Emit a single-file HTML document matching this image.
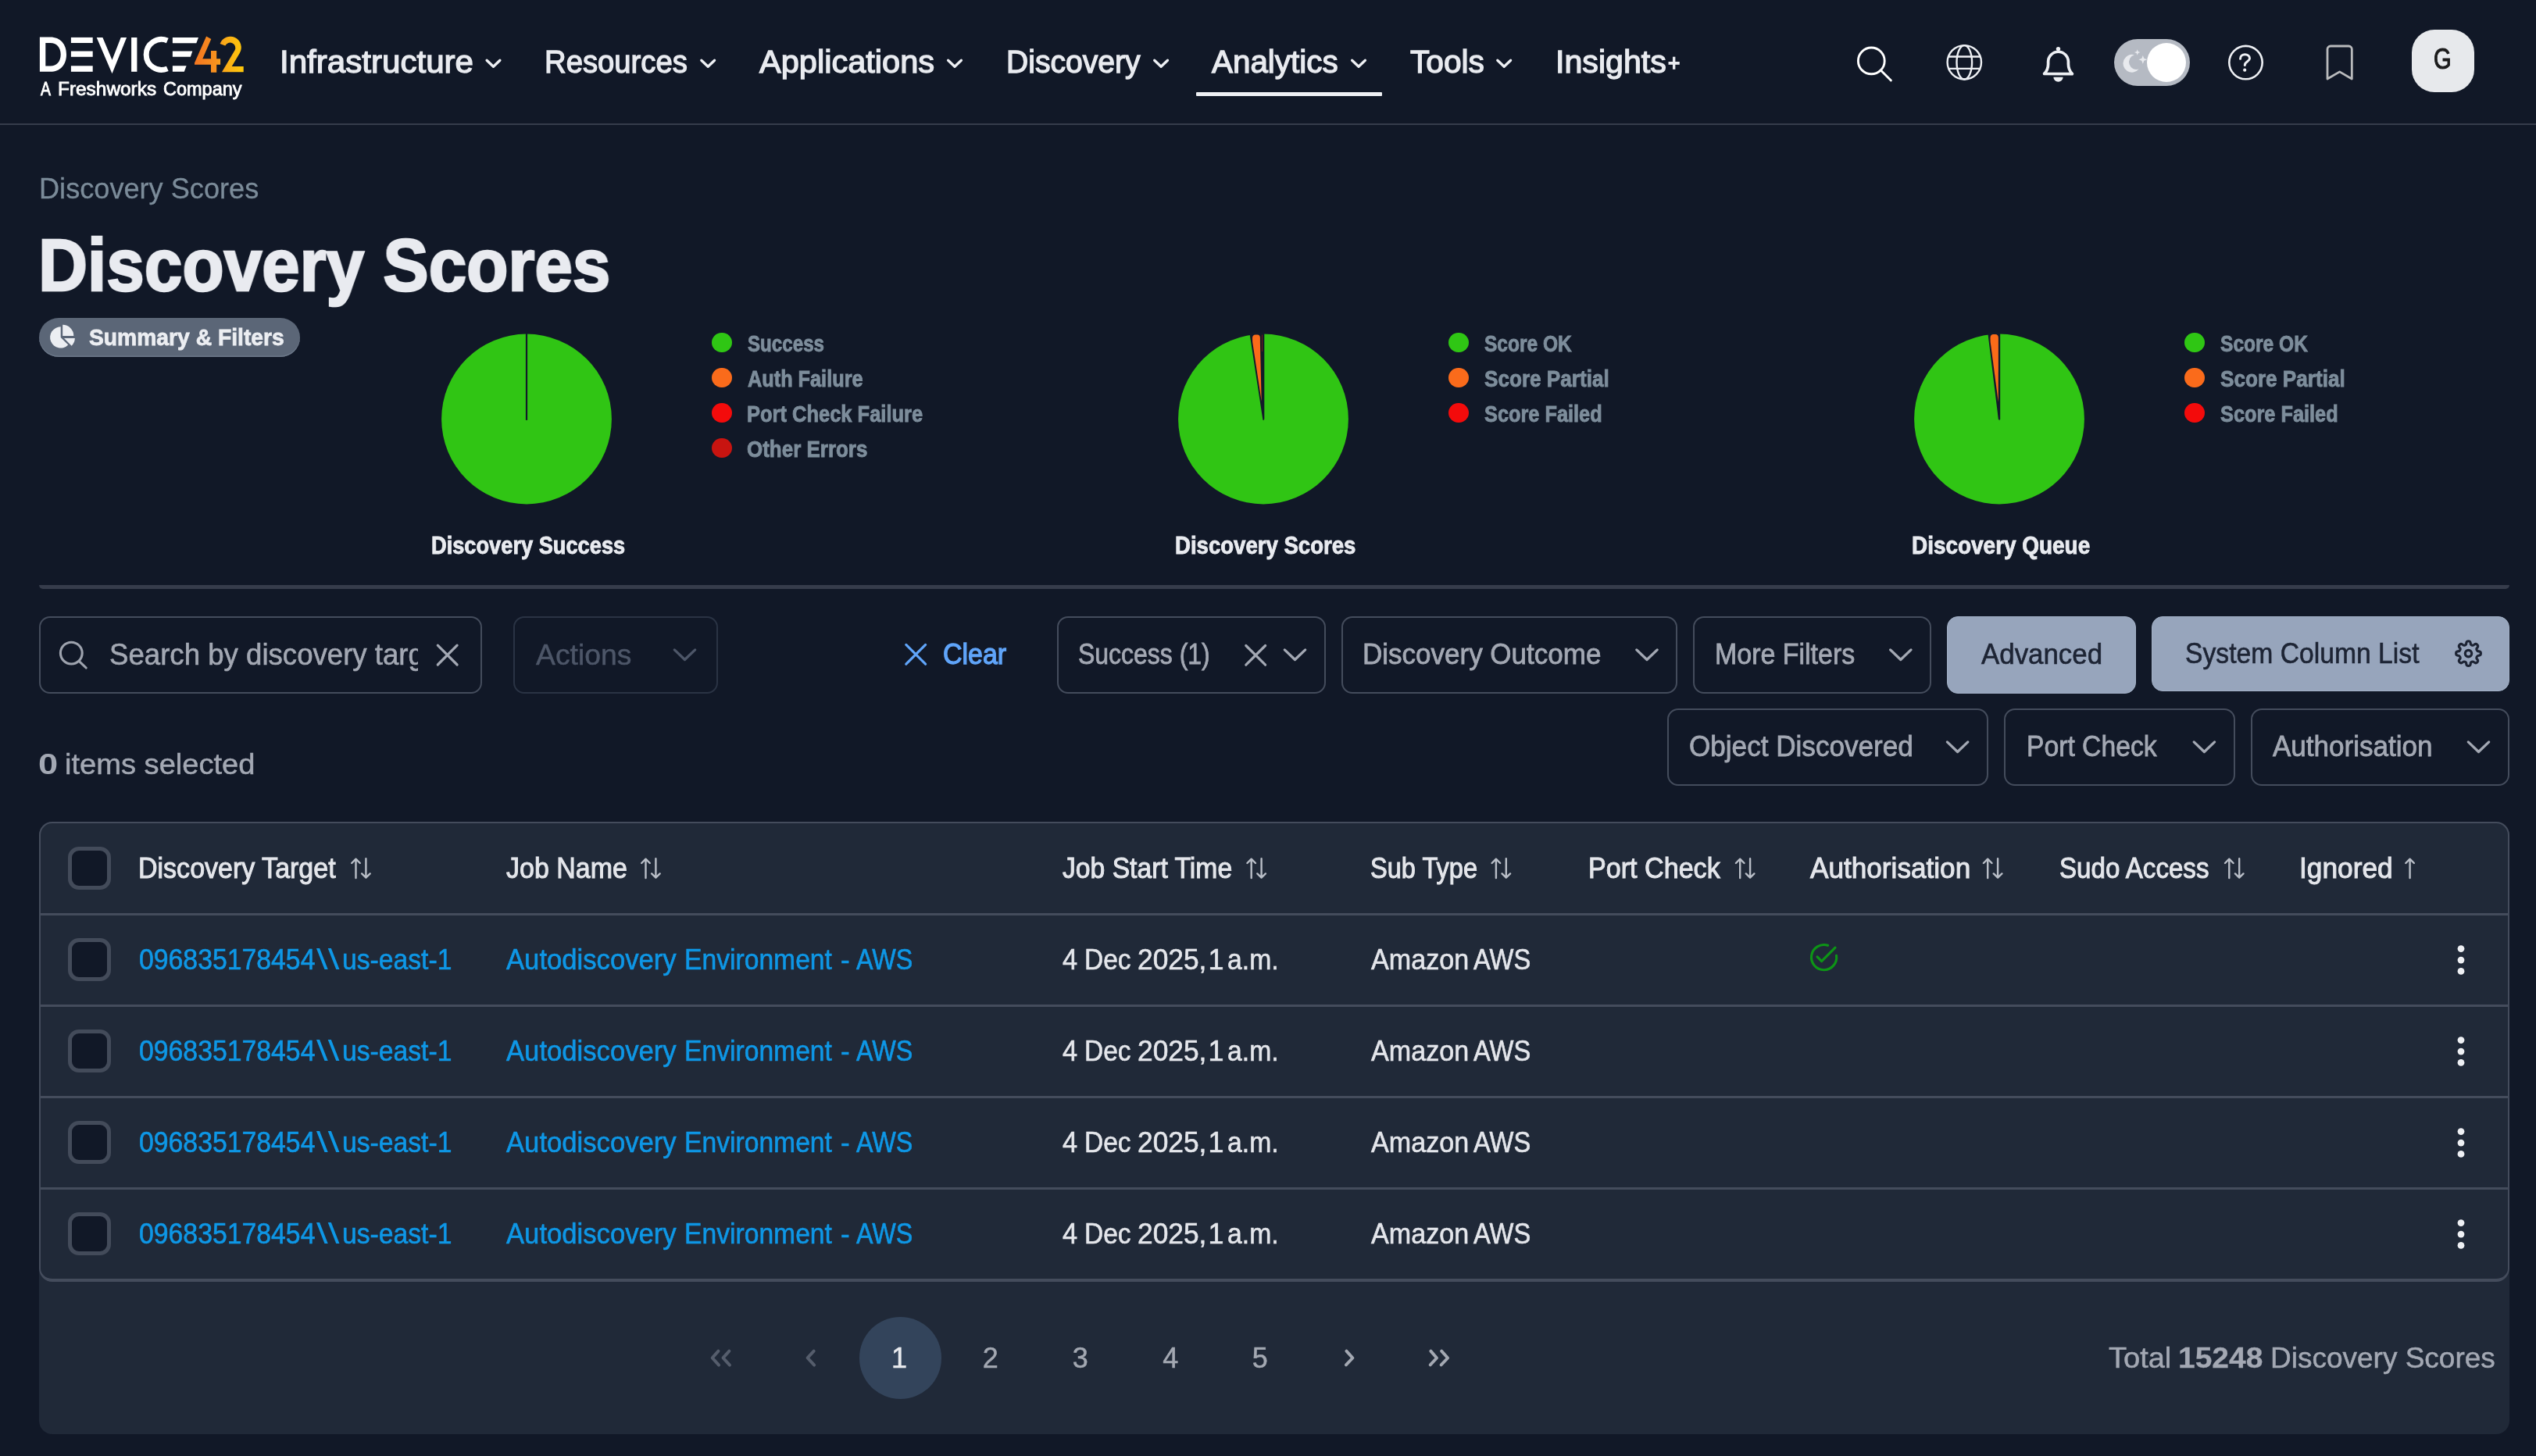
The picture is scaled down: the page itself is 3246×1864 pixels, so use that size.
<!DOCTYPE html>
<html lang="en"><head><meta charset="utf-8"><title>Discovery Scores - Device42</title>
<style>
*{margin:0;padding:0;box-sizing:border-box}
html,body{width:3246px;height:1864px;overflow:hidden;background:#111827}
body{position:relative;font-family:"Liberation Sans",sans-serif;color:#e9ebf0}
.t{position:absolute;line-height:0;white-space:pre;transform-origin:0 0;display:block}
.a{position:absolute;display:block}
#app{position:absolute;left:0;top:0;width:3246px;height:1864px;will-change:transform}
svg{position:absolute;overflow:visible}
.box{position:absolute;border:2px solid #444c5c;border-radius:14px;height:99px}
.btn{position:absolute;background:#97a5bc;border-radius:14px;border:1px solid #a2b0c6}
.cb{position:absolute;width:55px;height:55px;left:87px;border:5px solid #434b5a;border-radius:14px;background:#111827}
.hr{position:absolute;left:52px;width:3158px;height:3px;background:#444c5c}
.dot{position:absolute;width:25.6px;height:25.6px;border-radius:50%}
</style></head>
<body>
<div id="app">

<header class="topbar">
<div class="a" style="left:0;top:0;width:3246px;height:158px;background:#111827"></div>
<div class="a navline" style="left:0;top:158px;width:3246px;height:2px;background:#363c4b"></div>

<svg class="logo" width="3246" height="160" viewBox="0 0 3246 160" style="left:0;top:0">
<defs><linearGradient id="g42" gradientUnits="userSpaceOnUse" x1="249" y1="0" x2="312" y2="0">
<stop offset="0" stop-color="#f37521"/><stop offset="0.45" stop-color="#f7931e"/><stop offset="0.6" stop-color="#faa919"/><stop offset="1" stop-color="#ffc90a"/></linearGradient></defs>
<g fill="#ffffff">
<path fill-rule="evenodd" d="M50.9,47.6 H64.5 C77,47.6 85,56.5 85,69.7 C85,83 77,91.8 64.5,91.8 H50.9 Z M58.3,54.9 V84.5 H64.5 C72.5,84.5 77.7,78.7 77.7,69.7 C77.7,60.7 72.5,54.9 64.5,54.9 Z"/>
<rect x="90.9" y="47.9" width="27.8" height="7.1"/><rect x="90.9" y="65.5" width="27.8" height="7.3"/><rect x="90.9" y="84.3" width="27.8" height="7.5"/>
<path d="M123.7,48 H131.4 L143.5,76.8 L154.7,48 H162.1 L143.5,94.3 Z"/>
<rect x="168.1" y="48" width="7.3" height="43.8"/>
<path d="M214.3,51.95 A19.5,19.5 0 1 0 214.3,87.85" fill="none" stroke="#ffffff" stroke-width="7"/>
<path d="M220.9,48.1 H254 L251.3,55.2 H220.9 Z M220.9,65.6 H246.3 L243.9,72.8 H220.9 Z M220.9,84.2 H238.6 L235.8,91.7 H220.9 Z"/>
</g>
<g fill="url(#g42)">
<path d="M264.1,46.6 L249,80.5 L249,82.7 L270,82.7 L270,92.8 L277.2,92.8 L277.2,82.7 L282.1,82.7 L282.1,75.3 L277.2,75.3 L277.2,65 L270,65 L270,75.3 L259.3,75.3 L270.3,49.9 Z"/>
<path d="M281.6,56 A14,14 0 1 1 306.8,67.9 L296.7,85.1 H311.7 V92.2 H284 L300.6,64.3 A6.8,6.8 0 1 0 288.3,58.5 Z"/>
</g>
</svg>

<span class="t" style="left:52.34px;top:113.53px;font-size:23px;color:#ffffff;transform:scaleX(0.8452);-webkit-text-stroke:0.8px #ffffff;">A</span>
<span class="t" style="left:74.26px;top:113.53px;font-size:23px;color:#ffffff;transform:scaleX(1.0613);-webkit-text-stroke:0.8px #ffffff;">Freshworks</span>
<span class="t" style="left:209.19px;top:113.53px;font-size:23px;color:#ffffff;transform:scaleX(1.0219);-webkit-text-stroke:0.8px #ffffff;">Company</span>
<nav>
<span class="t" style="left:357.63px;top:79.33px;font-size:40px;color:#e9ebf0;transform:scaleX(1.0524);-webkit-text-stroke:1.3px #e9ebf0;">Infrastructure</span>
<span class="t" style="left:697.45px;top:79.33px;font-size:40px;color:#e9ebf0;transform:scaleX(0.9565);-webkit-text-stroke:1.3px #e9ebf0;">Resources</span>
<span class="t" style="left:971.68px;top:79.33px;font-size:40px;color:#e9ebf0;transform:scaleX(1.0390);-webkit-text-stroke:1.3px #e9ebf0;">Applications</span>
<span class="t" style="left:1287.80px;top:79.33px;font-size:40px;color:#e9ebf0;transform:scaleX(0.9771);-webkit-text-stroke:1.3px #e9ebf0;">Discovery</span>
<span class="t" style="left:1551.16px;top:79.33px;font-size:40px;color:#e9ebf0;transform:scaleX(1.0096);-webkit-text-stroke:1.3px #e9ebf0;">Analytics</span>
<span class="t" style="left:1805.16px;top:79.33px;font-size:40px;color:#e9ebf0;transform:scaleX(1.0162);-webkit-text-stroke:1.3px #e9ebf0;">Tools</span>
<span class="t" style="left:1990.78px;top:79.33px;font-size:40px;color:#e9ebf0;transform:scaleX(1.0292);-webkit-text-stroke:1.3px #e9ebf0;">Insights</span>
<span class="t" style="left:2134.82px;top:80.60px;font-size:30px;color:#e9ebf0;transform:scaleX(0.8750);-webkit-text-stroke:1.6px #e9ebf0;">+</span>
<div class="a active-ul" style="left:1530.6px;top:118px;width:238.4px;height:5px;background:#eef0f4;border-radius:1px"></div>
</nav>

<svg class="nav-icons" width="3246" height="160" viewBox="0 0 3246 160" style="left:0;top:0">
<g fill="none" stroke="#eef0f4" stroke-width="3.1" stroke-linecap="round" stroke-linejoin="round">
<path d="M623.1,77.2 L631.5,85.2 L639.9,77.2" fill="none" stroke="#eef0f4" stroke-width="3.3" stroke-linecap="round" stroke-linejoin="round"/><path d="M897.8,77.2 L906.2,85.2 L914.6,77.2" fill="none" stroke="#eef0f4" stroke-width="3.3" stroke-linecap="round" stroke-linejoin="round"/><path d="M1213.6,77.2 L1222.0,85.2 L1230.4,77.2" fill="none" stroke="#eef0f4" stroke-width="3.3" stroke-linecap="round" stroke-linejoin="round"/><path d="M1477.7,77.2 L1486.1,85.2 L1494.5,77.2" fill="none" stroke="#eef0f4" stroke-width="3.3" stroke-linecap="round" stroke-linejoin="round"/><path d="M1730.6,77.2 L1739.0,85.2 L1747.4,77.2" fill="none" stroke="#eef0f4" stroke-width="3.3" stroke-linecap="round" stroke-linejoin="round"/><path d="M1916.8,77.2 L1925.2,85.2 L1933.6,77.2" fill="none" stroke="#eef0f4" stroke-width="3.3" stroke-linecap="round" stroke-linejoin="round"/>
</g>
<!-- search -->
<g fill="none" stroke="#ffffff" stroke-width="2.9" stroke-linecap="round"><circle cx="2395.3" cy="77.9" r="16.9"/><path d="M2407.6,90.2 L2420.4,103"/></g>
<!-- globe -->
<g fill="none" stroke="#eef0f4" stroke-width="2.4"><circle cx="2514.3" cy="79.8" r="21.7"/><ellipse cx="2514.3" cy="79.8" rx="9.8" ry="21.7"/><path d="M2494,72.5 H2534.6 M2494,87.9 H2534.6"/></g>
<!-- bell -->
<g fill="none" stroke="#eef0f4" stroke-width="3.7" stroke-linejoin="round" stroke-linecap="round"><path d="M2616.6,94.4 C2620,91 2621.6,87 2621.6,82 V79.1 A12.9,12.9 0 0 1 2647.4,79.1 V82 C2647.4,87 2649,91 2652.4,94.6 Z"/></g><circle cx="2634.5" cy="62.6" r="2.7" fill="#eef0f4"/>
<path d="M2628.4,98.7 H2640.6 A6.1,6.1 0 0 1 2628.4,98.7 Z" fill="#eef0f4"/>
<!-- help -->
<g fill="none" stroke="#eef0f4" stroke-width="2.6" stroke-linecap="round"><circle cx="2874.5" cy="80.1" r="21.2"/><path d="M2867.5,75.2 C2867.5,71.8 2870.2,69.8 2873.5,69.8 C2876.9,69.8 2879.5,71.9 2879.5,74.8 C2879.5,78.8 2873.3,78.9 2873.3,83.4" stroke-width="3"/></g>
<circle cx="2873.2" cy="89.7" r="2.1" fill="#eef0f4"/>
<!-- bookmark -->
<path d="M2979,101 V63 a4,4 0 0 1 4,-4 H3006.3 a4,4 0 0 1 4,4 V101 L2994.65,91.9 Z" fill="none" stroke="#b9babc" stroke-width="2.8" stroke-linejoin="round"/>
</svg>
<div class="a toggle" style="left:2705.8px;top:49.7px;width:97.3px;height:60.3px;border-radius:31px;background:#b5bac3"></div>
<div class="a knob" style="left:2747.6px;top:54.7px;width:50.5px;height:50.5px;border-radius:50%;background:#ffffff"></div>
<svg class="moon" width="40" height="40" viewBox="2710 60 40 40" style="left:2710px;top:60px">
<path d="M2731.8,70.2 A11.4,11.4 0 1 0 2737.6,88.6 A9.6,9.6 0 0 1 2731.8,70.2 Z" fill="#e8eaee"/>
<path d="M2735.7,63.2 L2736.7,66 L2739.5,67 L2736.7,68 L2735.7,70.8 L2734.7,68 L2731.9,67 L2734.7,66 Z" fill="#e8eaee"/>
<path d="M2742.8,70.9 L2744.3,74.8 L2748.2,76.3 L2744.3,77.8 L2742.8,81.7 L2741.3,77.8 L2737.4,76.3 L2741.3,74.8 Z" fill="#e8eaee"/>
</svg>
<div class="a avatar" style="left:3086.8px;top:37.9px;width:80.4px;height:79.9px;border-radius:29px;background:#e7e9ec"></div>

<span class="t" style="left:3114.55px;top:76.47px;font-size:37px;color:#1b1b1b;transform:scaleX(0.7860);-webkit-text-stroke:1.1px #1b1b1b;">G</span>
</header>

<main>

<section class="page-head">
<span class="t" style="left:49.64px;top:241.82px;font-size:36px;color:#7b8b99;transform:scaleX(1.0041);-webkit-text-stroke:0.3px #7b8b99;">Discovery Scores</span>
<span class="t" style="left:48.88px;top:339.06px;font-size:95px;color:#e9ebf0;font-weight:700;transform:scaleX(0.9185);-webkit-text-stroke:2.6px #e9ebf0;">Discovery Scores</span>
<div class="a badge" style="left:50.2px;top:406.9px;width:333.8px;height:49.8px;border-radius:25px;background:#5b6677;box-shadow:inset 0 -1.5px 0 #6c7889"></div>
<svg class="pie-ic" width="40" height="36" viewBox="60 412 40 36" style="left:60px;top:412px"><g fill="#eceef2">
<path d="M77.7,431.9 L77.7,418.3 A13.6,13.6 0 1 0 87.3,441.5 Z"/>
<path d="M80.2,429.9 V415.8 A14.1,14.1 0 0 1 94.3,429.9 Z"/>
<path d="M82,433.1 H95.9 A13.9,13.9 0 0 1 91.6,442.7 Z"/></g></svg>
<span class="t" style="left:113.98px;top:432.17px;font-size:29.5px;color:#eceef2;font-weight:700;transform:scaleX(0.9580);-webkit-text-stroke:0.8px #eceef2;">Summary &amp; Filters</span>
</section>
<section class="summary">

<svg class="charts" width="3246" height="330" viewBox="0 420 3246 330" style="left:0;top:420px">
<circle cx="674.0" cy="536.5" r="108.9" fill="#30c514"/><path d="M674.0,537.9 V426.6" stroke="#131a2a" stroke-width="2.2"/>
<circle cx="1617.0" cy="536.5" r="108.9" fill="#30c514"/><path d="M1599.3,426 L1618.3,426 L1618.3,536.6 L1617.3,538.3 L1616.4,537.4 Z" fill="#131a2a"/><path d="M1614.7,514 L1603.2,438 L1603.0,433 Q1603.0,428.6 1607.0,428.5 L1609.5,428.5 Q1613.0,428.5 1612.9,433 L1612.9,438 Z" fill="#fb6b19"/><path d="M1615.5,428.6 V450" stroke="#a11a12" stroke-width="0.9" opacity="0.75"/>
<circle cx="2559.0" cy="536.5" r="108.9" fill="#30c514"/><path d="M2544.3,426 L2560.2,426 L2560.2,536.6 L2559.1,538.3 L2557.8,536.2 Z" fill="#131a2a"/><path d="M2557.8,514.8 L2547.7,438 L2547.5,433 Q2547.5,428.2 2551.5,428.1 L2554.0,428.1 Q2557.9,428.1 2557.9,433 L2557.9,438 Z" fill="#fb6b19"/>
</svg>

<span class="dot" style="left:911.3px;top:425.7px;background:#2fc614"></span><span class="dot" style="left:911.3px;top:470.7px;background:#fa6b1b"></span><span class="dot" style="left:911.3px;top:515.7px;background:#f30b0b"></span><span class="dot" style="left:911.3px;top:560.7px;background:#c81410"></span><span class="dot" style="left:1854.3px;top:425.7px;background:#2fc614"></span><span class="dot" style="left:1854.3px;top:470.7px;background:#fa6b1b"></span><span class="dot" style="left:1854.3px;top:515.7px;background:#f30b0b"></span><span class="dot" style="left:2796.3px;top:425.7px;background:#2fc614"></span><span class="dot" style="left:2796.3px;top:470.7px;background:#fa6b1b"></span><span class="dot" style="left:2796.3px;top:515.7px;background:#f30b0b"></span>
<span class="t" style="left:956.87px;top:439.75px;font-size:29px;color:#7d8d9b;font-weight:700;transform:scaleX(0.8325);-webkit-text-stroke:0.9px #7d8d9b;">Success</span>
<span class="t" style="left:956.89px;top:484.75px;font-size:29px;color:#7d8d9b;font-weight:700;transform:scaleX(0.8721);-webkit-text-stroke:0.9px #7d8d9b;">Auth Failure</span>
<span class="t" style="left:956.02px;top:529.75px;font-size:29px;color:#7d8d9b;font-weight:700;transform:scaleX(0.8785);-webkit-text-stroke:0.9px #7d8d9b;">Port Check Failure</span>
<span class="t" style="left:956.01px;top:574.75px;font-size:29px;color:#7d8d9b;font-weight:700;transform:scaleX(0.8954);-webkit-text-stroke:0.9px #7d8d9b;">Other Errors</span>
<span class="t" style="left:1899.88px;top:439.75px;font-size:29px;color:#7d8d9b;font-weight:700;transform:scaleX(0.8459);-webkit-text-stroke:0.9px #7d8d9b;">Score OK</span>
<span class="t" style="left:1899.91px;top:484.75px;font-size:29px;color:#7d8d9b;font-weight:700;transform:scaleX(0.9009);-webkit-text-stroke:0.9px #7d8d9b;">Score Partial</span>
<span class="t" style="left:1899.89px;top:529.75px;font-size:29px;color:#7d8d9b;font-weight:700;transform:scaleX(0.8733);-webkit-text-stroke:0.9px #7d8d9b;">Score Failed</span>
<span class="t" style="left:2841.98px;top:439.75px;font-size:29px;color:#7d8d9b;font-weight:700;transform:scaleX(0.8466);-webkit-text-stroke:0.9px #7d8d9b;">Score OK</span>
<span class="t" style="left:2842.01px;top:484.75px;font-size:29px;color:#7d8d9b;font-weight:700;transform:scaleX(0.9009);-webkit-text-stroke:0.9px #7d8d9b;">Score Partial</span>
<span class="t" style="left:2841.99px;top:529.75px;font-size:29px;color:#7d8d9b;font-weight:700;transform:scaleX(0.8733);-webkit-text-stroke:0.9px #7d8d9b;">Score Failed</span>
<span class="t" style="left:552.24px;top:699.35px;font-size:31px;color:#e9ebf0;font-weight:700;transform:scaleX(0.8780);-webkit-text-stroke:0.9px #e9ebf0;">Discovery Success</span>
<span class="t" style="left:1503.82px;top:699.35px;font-size:31px;color:#e9ebf0;font-weight:700;transform:scaleX(0.8892);-webkit-text-stroke:0.9px #e9ebf0;">Discovery Scores</span>
<span class="t" style="left:2446.60px;top:699.35px;font-size:31px;color:#e9ebf0;font-weight:700;transform:scaleX(0.9010);-webkit-text-stroke:0.9px #e9ebf0;">Discovery Queue</span>
<div class="a divider" style="left:50px;top:749px;width:3162px;height:5px;background:#363c4b;border-radius:0 0 5px 5px"></div>
</section>


<section class="filters">
<div class="box" style="left:50px;top:789px;width:567px"></div>
<div class="a" style="left:136px;top:800px;width:399.2px;height:78px;overflow:hidden">
<span class="t" id="ph" style="left:4.33px;top:38.33px;font-size:38px;color:#a3a8b3;-webkit-text-stroke:0.6px #a3a8b3;transform:scaleX(0.9635)">Search by discovery target</span></div>
<div class="box" style="left:657px;top:789px;width:262px;border-color:#2a3344"></div>
<span class="t" style="left:685.55px;top:838.00px;font-size:37.5px;color:#4d5668;transform:scaleX(0.9949);-webkit-text-stroke:0.5px #4d5668;">Actions</span>
<span class="t" style="left:1207.47px;top:838.12px;font-size:36px;color:#60a5fa;transform:scaleX(0.9428);-webkit-text-stroke:1.3px #60a5fa;">Clear</span>
<div class="box" style="left:1353px;top:789px;width:344px"></div><span class="t" style="left:1380.47px;top:837.82px;font-size:36px;color:#a3a8b3;transform:scaleX(0.8879);-webkit-text-stroke:0.8px #a3a8b3;">Success (1)</span>
<div class="box" style="left:1717px;top:789px;width:430px"></div><span class="t" style="left:1743.84px;top:837.82px;font-size:36px;color:#a3a8b3;transform:scaleX(0.9722);-webkit-text-stroke:0.8px #a3a8b3;">Discovery Outcome</span>
<div class="box" style="left:2167px;top:789px;width:305px"></div><span class="t" style="left:2194.79px;top:837.82px;font-size:36px;color:#a3a8b3;transform:scaleX(0.9429);-webkit-text-stroke:0.8px #a3a8b3;">More Filters</span>
<div class="btn" style="left:2492px;top:789px;width:242px;height:99px"></div><span class="t" style="left:2536.29px;top:837.82px;font-size:36px;color:#1d2434;transform:scaleX(0.9685);-webkit-text-stroke:0.6px #1d2434;">Advanced</span>
<div class="btn" style="left:2754px;top:789px;width:458px;height:96px"></div><span class="t" style="left:2796.65px;top:837.02px;font-size:36px;color:#1d2434;transform:scaleX(0.9356);-webkit-text-stroke:0.6px #1d2434;">System Column List</span>
<div class="box" style="left:2134px;top:907px;width:411px"></div><span class="t" style="left:2161.81px;top:955.72px;font-size:36px;color:#a3a8b3;transform:scaleX(0.9750);-webkit-text-stroke:0.8px #a3a8b3;">Object Discovered</span>
<div class="box" style="left:2565px;top:907px;width:296px"></div><span class="t" style="left:2594.30px;top:955.72px;font-size:36px;color:#a3a8b3;transform:scaleX(0.9355);-webkit-text-stroke:0.8px #a3a8b3;">Port Check</span>
<div class="box" style="left:2881px;top:907px;width:331px"></div><span class="t" style="left:2909.29px;top:955.72px;font-size:36px;color:#a3a8b3;transform:scaleX(0.9732);-webkit-text-stroke:0.8px #a3a8b3;">Authorisation</span>
<span class="t" style="left:49.46px;top:978.85px;font-size:36.5px;color:#a3a8b3;font-weight:700;transform:scaleX(1.2389);">0</span>
<span class="t" style="left:82.67px;top:978.85px;font-size:36.5px;color:#a3a8b3;transform:scaleX(1.0436);-webkit-text-stroke:0.5px #a3a8b3;">items selected</span>
<svg class="f-icons" width="3246" height="240" viewBox="0 780 3246 240" style="left:0;top:780px">
<g fill="none" stroke="#9ea3ae" stroke-width="3.1" stroke-linecap="round"><circle cx="91.3" cy="836.1" r="13.9"/><path d="M101.4,846.6 L110.2,855"/></g>
<path d="M560.3,826.2 L585.1,851.0 M585.1,826.2 L560.3,851.0" fill="none" stroke="#a3a8b3" stroke-width="3.2" stroke-linecap="round"/>
<path d="M863.3,831.9 L876.5,844.5 L889.7,831.9" fill="none" stroke="#4d5668" stroke-width="3.3" stroke-linecap="round" stroke-linejoin="round"/>
<path d="M1159.8,825.4 L1184.6,850.2 M1184.6,825.4 L1159.8,850.2" fill="none" stroke="#60a5fa" stroke-width="3.2" stroke-linecap="round"/>
<path d="M1594.8,826.5 L1619.6,851.2 M1619.6,826.5 L1594.8,851.2" fill="none" stroke="#a3a8b3" stroke-width="3.2" stroke-linecap="round"/>
<path d="M1644.3,831.9 L1657.5,844.5 L1670.7,831.9" fill="none" stroke="#a3a8b3" stroke-width="3.3" stroke-linecap="round" stroke-linejoin="round"/>
<path d="M2094.8,831.9 L2108.0,844.5 L2121.2,831.9" fill="none" stroke="#a3a8b3" stroke-width="3.3" stroke-linecap="round" stroke-linejoin="round"/>
<path d="M2419.6,831.9 L2432.8,844.5 L2446.0,831.9" fill="none" stroke="#a3a8b3" stroke-width="3.3" stroke-linecap="round" stroke-linejoin="round"/>
<path d="M2492.4,949.9 L2505.6,962.5 L2518.8,949.9" fill="none" stroke="#a3a8b3" stroke-width="3.3" stroke-linecap="round" stroke-linejoin="round"/>
<path d="M2808.2,949.9 L2821.4,962.5 L2834.6,949.9" fill="none" stroke="#a3a8b3" stroke-width="3.3" stroke-linecap="round" stroke-linejoin="round"/>
<path d="M3159.3,949.9 L3172.5,962.5 L3185.7,949.9" fill="none" stroke="#a3a8b3" stroke-width="3.3" stroke-linecap="round" stroke-linejoin="round"/>
<path d="M3156.77,823.10A2.75,2.75 0 0 1 3162.23,823.10A2.74,2.74 0 0 0 3167.12,825.12A2.75,2.75 0 0 1 3170.98,828.98A2.74,2.74 0 0 0 3173.00,833.87A2.75,2.75 0 0 1 3173.00,839.33A2.74,2.74 0 0 0 3170.98,844.22A2.75,2.75 0 0 1 3167.12,848.08A2.74,2.74 0 0 0 3162.23,850.10A2.75,2.75 0 0 1 3156.77,850.10A2.74,2.74 0 0 0 3151.88,848.08A2.75,2.75 0 0 1 3148.02,844.22A2.74,2.74 0 0 0 3146.00,839.33A2.75,2.75 0 0 1 3146.00,833.87A2.74,2.74 0 0 0 3148.02,828.98A2.75,2.75 0 0 1 3151.88,825.12A2.74,2.74 0 0 0 3156.77,823.10Z" fill="none" stroke="#1d2434" stroke-width="3.1" stroke-linejoin="round"/>
<circle cx="3159.5" cy="836.6" r="4.2" fill="none" stroke="#1d2434" stroke-width="3.2"/>
</svg>
</section>


<section class="table-wrap">
<div class="a card" style="left:50px;top:1052px;width:3162px;height:784px;background:#202938;border-radius:17px"></div>
<div class="a tbl" style="left:50px;top:1052px;width:3162px;height:589px;border:2px solid #444c5c;border-bottom-width:4px;border-radius:17px"></div>
<div class="hr" style="top:1169px"></div>
<div class="hr" style="top:1286px"></div>
<div class="hr" style="top:1403px"></div>
<div class="hr" style="top:1520px"></div>
<span class="cb" style="top:1084px"></span>
<span class="cb" style="top:1201px"></span>
<span class="cb" style="top:1318px"></span>
<span class="cb" style="top:1435px"></span>
<span class="cb" style="top:1552px"></span>
<span class="t" style="left:177.38px;top:1112.32px;font-size:36px;color:#e4e6eb;transform:scaleX(0.9447);-webkit-text-stroke:1.0px #e4e6eb;">Discovery Target</span>
<span class="t" style="left:647.97px;top:1112.32px;font-size:36px;color:#e4e6eb;transform:scaleX(0.9436);-webkit-text-stroke:1.0px #e4e6eb;">Job Name</span>
<span class="t" style="left:1360.37px;top:1112.32px;font-size:36px;color:#e4e6eb;transform:scaleX(0.9355);-webkit-text-stroke:1.0px #e4e6eb;">Job Start Time</span>
<span class="t" style="left:1753.65px;top:1112.32px;font-size:36px;color:#e4e6eb;transform:scaleX(0.9048);-webkit-text-stroke:1.0px #e4e6eb;">Sub Type</span>
<span class="t" style="left:2032.88px;top:1112.32px;font-size:36px;color:#e4e6eb;transform:scaleX(0.9474);-webkit-text-stroke:1.0px #e4e6eb;">Port Check</span>
<span class="t" style="left:2317.29px;top:1112.32px;font-size:36px;color:#e4e6eb;transform:scaleX(0.9765);-webkit-text-stroke:1.0px #e4e6eb;">Authorisation</span>
<span class="t" style="left:2636.44px;top:1112.32px;font-size:36px;color:#e4e6eb;transform:scaleX(0.9201);-webkit-text-stroke:1.0px #e4e6eb;">Sudo Access</span>
<span class="t" style="left:2942.75px;top:1112.32px;font-size:36px;color:#e4e6eb;transform:scaleX(0.9807);-webkit-text-stroke:1.0px #e4e6eb;">Ignored</span><span class="t" style="left:177.64px;top:1228.62px;font-size:36px;color:#0e97e6;transform:scaleX(0.9383);-webkit-text-stroke:0.6px #0e97e6;">096835178454</span>
<span class="t" style="left:404.80px;top:1229.22px;font-size:36px;color:#0e97e6;transform:scaleX(1.4699);">\\</span>
<span class="t" style="left:437.81px;top:1228.62px;font-size:36px;color:#0e97e6;transform:scaleX(0.9354);-webkit-text-stroke:0.6px #0e97e6;">us-east-1</span>
<span class="t" style="left:647.79px;top:1228.62px;font-size:36px;color:#0e97e6;transform:scaleX(0.9625);-webkit-text-stroke:0.6px #0e97e6;">Autodiscovery</span>
<span class="t" style="left:876.31px;top:1228.62px;font-size:36px;color:#0e97e6;transform:scaleX(0.9348);-webkit-text-stroke:0.6px #0e97e6;">Environment</span>
<span class="t" style="left:1075.82px;top:1228.62px;font-size:36px;color:#0e97e6;transform:scaleX(0.9717);-webkit-text-stroke:0.6px #0e97e6;">-</span>
<span class="t" style="left:1096.37px;top:1228.62px;font-size:36px;color:#0e97e6;transform:scaleX(0.8971);-webkit-text-stroke:0.6px #0e97e6;">AWS</span>
<span class="t" style="left:1360.19px;top:1228.62px;font-size:36px;color:#e4e6eb;transform:scaleX(0.9541);-webkit-text-stroke:0.6px #e4e6eb;">4</span>
<span class="t" style="left:1388.02px;top:1228.62px;font-size:36px;color:#e4e6eb;transform:scaleX(0.9310);-webkit-text-stroke:0.6px #e4e6eb;">Dec</span>
<span class="t" style="left:1456.11px;top:1228.62px;font-size:36px;color:#e4e6eb;transform:scaleX(0.9806);-webkit-text-stroke:0.6px #e4e6eb;">2025,</span>
<span class="t" style="left:1546.40px;top:1228.62px;font-size:36px;color:#e4e6eb;-webkit-text-stroke:0.6px #e4e6eb;">1</span>
<span class="t" style="left:1571.04px;top:1228.62px;font-size:36px;color:#e4e6eb;transform:scaleX(0.9368);-webkit-text-stroke:0.6px #e4e6eb;">a.m.</span>
<span class="t" style="left:1754.68px;top:1228.62px;font-size:36px;color:#e4e6eb;transform:scaleX(0.9476);-webkit-text-stroke:0.6px #e4e6eb;">Amazon</span>
<span class="t" style="left:1885.97px;top:1228.62px;font-size:36px;color:#e4e6eb;transform:scaleX(0.9084);-webkit-text-stroke:0.6px #e4e6eb;">AWS</span><span class="t" style="left:177.64px;top:1345.62px;font-size:36px;color:#0e97e6;transform:scaleX(0.9383);-webkit-text-stroke:0.6px #0e97e6;">096835178454</span>
<span class="t" style="left:404.80px;top:1346.22px;font-size:36px;color:#0e97e6;transform:scaleX(1.4699);">\\</span>
<span class="t" style="left:437.81px;top:1345.62px;font-size:36px;color:#0e97e6;transform:scaleX(0.9354);-webkit-text-stroke:0.6px #0e97e6;">us-east-1</span>
<span class="t" style="left:647.79px;top:1345.62px;font-size:36px;color:#0e97e6;transform:scaleX(0.9625);-webkit-text-stroke:0.6px #0e97e6;">Autodiscovery</span>
<span class="t" style="left:876.31px;top:1345.62px;font-size:36px;color:#0e97e6;transform:scaleX(0.9348);-webkit-text-stroke:0.6px #0e97e6;">Environment</span>
<span class="t" style="left:1075.82px;top:1345.62px;font-size:36px;color:#0e97e6;transform:scaleX(0.9717);-webkit-text-stroke:0.6px #0e97e6;">-</span>
<span class="t" style="left:1096.37px;top:1345.62px;font-size:36px;color:#0e97e6;transform:scaleX(0.8971);-webkit-text-stroke:0.6px #0e97e6;">AWS</span>
<span class="t" style="left:1360.19px;top:1345.62px;font-size:36px;color:#e4e6eb;transform:scaleX(0.9541);-webkit-text-stroke:0.6px #e4e6eb;">4</span>
<span class="t" style="left:1388.02px;top:1345.62px;font-size:36px;color:#e4e6eb;transform:scaleX(0.9310);-webkit-text-stroke:0.6px #e4e6eb;">Dec</span>
<span class="t" style="left:1456.11px;top:1345.62px;font-size:36px;color:#e4e6eb;transform:scaleX(0.9806);-webkit-text-stroke:0.6px #e4e6eb;">2025,</span>
<span class="t" style="left:1546.40px;top:1345.62px;font-size:36px;color:#e4e6eb;-webkit-text-stroke:0.6px #e4e6eb;">1</span>
<span class="t" style="left:1571.04px;top:1345.62px;font-size:36px;color:#e4e6eb;transform:scaleX(0.9368);-webkit-text-stroke:0.6px #e4e6eb;">a.m.</span>
<span class="t" style="left:1754.68px;top:1345.62px;font-size:36px;color:#e4e6eb;transform:scaleX(0.9476);-webkit-text-stroke:0.6px #e4e6eb;">Amazon</span>
<span class="t" style="left:1885.97px;top:1345.62px;font-size:36px;color:#e4e6eb;transform:scaleX(0.9084);-webkit-text-stroke:0.6px #e4e6eb;">AWS</span><span class="t" style="left:177.64px;top:1462.62px;font-size:36px;color:#0e97e6;transform:scaleX(0.9383);-webkit-text-stroke:0.6px #0e97e6;">096835178454</span>
<span class="t" style="left:404.80px;top:1463.22px;font-size:36px;color:#0e97e6;transform:scaleX(1.4699);">\\</span>
<span class="t" style="left:437.81px;top:1462.62px;font-size:36px;color:#0e97e6;transform:scaleX(0.9354);-webkit-text-stroke:0.6px #0e97e6;">us-east-1</span>
<span class="t" style="left:647.79px;top:1462.62px;font-size:36px;color:#0e97e6;transform:scaleX(0.9625);-webkit-text-stroke:0.6px #0e97e6;">Autodiscovery</span>
<span class="t" style="left:876.31px;top:1462.62px;font-size:36px;color:#0e97e6;transform:scaleX(0.9348);-webkit-text-stroke:0.6px #0e97e6;">Environment</span>
<span class="t" style="left:1075.82px;top:1462.62px;font-size:36px;color:#0e97e6;transform:scaleX(0.9717);-webkit-text-stroke:0.6px #0e97e6;">-</span>
<span class="t" style="left:1096.37px;top:1462.62px;font-size:36px;color:#0e97e6;transform:scaleX(0.8971);-webkit-text-stroke:0.6px #0e97e6;">AWS</span>
<span class="t" style="left:1360.19px;top:1462.62px;font-size:36px;color:#e4e6eb;transform:scaleX(0.9541);-webkit-text-stroke:0.6px #e4e6eb;">4</span>
<span class="t" style="left:1388.02px;top:1462.62px;font-size:36px;color:#e4e6eb;transform:scaleX(0.9310);-webkit-text-stroke:0.6px #e4e6eb;">Dec</span>
<span class="t" style="left:1456.11px;top:1462.62px;font-size:36px;color:#e4e6eb;transform:scaleX(0.9806);-webkit-text-stroke:0.6px #e4e6eb;">2025,</span>
<span class="t" style="left:1546.40px;top:1462.62px;font-size:36px;color:#e4e6eb;-webkit-text-stroke:0.6px #e4e6eb;">1</span>
<span class="t" style="left:1571.04px;top:1462.62px;font-size:36px;color:#e4e6eb;transform:scaleX(0.9368);-webkit-text-stroke:0.6px #e4e6eb;">a.m.</span>
<span class="t" style="left:1754.68px;top:1462.62px;font-size:36px;color:#e4e6eb;transform:scaleX(0.9476);-webkit-text-stroke:0.6px #e4e6eb;">Amazon</span>
<span class="t" style="left:1885.97px;top:1462.62px;font-size:36px;color:#e4e6eb;transform:scaleX(0.9084);-webkit-text-stroke:0.6px #e4e6eb;">AWS</span><span class="t" style="left:177.64px;top:1579.62px;font-size:36px;color:#0e97e6;transform:scaleX(0.9383);-webkit-text-stroke:0.6px #0e97e6;">096835178454</span>
<span class="t" style="left:404.80px;top:1580.22px;font-size:36px;color:#0e97e6;transform:scaleX(1.4699);">\\</span>
<span class="t" style="left:437.81px;top:1579.62px;font-size:36px;color:#0e97e6;transform:scaleX(0.9354);-webkit-text-stroke:0.6px #0e97e6;">us-east-1</span>
<span class="t" style="left:647.79px;top:1579.62px;font-size:36px;color:#0e97e6;transform:scaleX(0.9625);-webkit-text-stroke:0.6px #0e97e6;">Autodiscovery</span>
<span class="t" style="left:876.31px;top:1579.62px;font-size:36px;color:#0e97e6;transform:scaleX(0.9348);-webkit-text-stroke:0.6px #0e97e6;">Environment</span>
<span class="t" style="left:1075.82px;top:1579.62px;font-size:36px;color:#0e97e6;transform:scaleX(0.9717);-webkit-text-stroke:0.6px #0e97e6;">-</span>
<span class="t" style="left:1096.37px;top:1579.62px;font-size:36px;color:#0e97e6;transform:scaleX(0.8971);-webkit-text-stroke:0.6px #0e97e6;">AWS</span>
<span class="t" style="left:1360.19px;top:1579.62px;font-size:36px;color:#e4e6eb;transform:scaleX(0.9541);-webkit-text-stroke:0.6px #e4e6eb;">4</span>
<span class="t" style="left:1388.02px;top:1579.62px;font-size:36px;color:#e4e6eb;transform:scaleX(0.9310);-webkit-text-stroke:0.6px #e4e6eb;">Dec</span>
<span class="t" style="left:1456.11px;top:1579.62px;font-size:36px;color:#e4e6eb;transform:scaleX(0.9806);-webkit-text-stroke:0.6px #e4e6eb;">2025,</span>
<span class="t" style="left:1546.40px;top:1579.62px;font-size:36px;color:#e4e6eb;-webkit-text-stroke:0.6px #e4e6eb;">1</span>
<span class="t" style="left:1571.04px;top:1579.62px;font-size:36px;color:#e4e6eb;transform:scaleX(0.9368);-webkit-text-stroke:0.6px #e4e6eb;">a.m.</span>
<span class="t" style="left:1754.68px;top:1579.62px;font-size:36px;color:#e4e6eb;transform:scaleX(0.9476);-webkit-text-stroke:0.6px #e4e6eb;">Amazon</span>
<span class="t" style="left:1885.97px;top:1579.62px;font-size:36px;color:#e4e6eb;transform:scaleX(0.9084);-webkit-text-stroke:0.6px #e4e6eb;">AWS</span>
<svg class="t-icons" width="3246" height="600" viewBox="0 1050 3246 600" style="left:0;top:1050px">
<path d="M455.5,1124.0 V1099.8 M450.2,1105.0 L455.5,1099.7 L460.8,1105.0 M468.4,1099.2 V1123.5 M463.1,1118.4 L468.4,1123.7 L473.7,1118.4" fill="none" stroke="#b9bec7" stroke-width="2.4" stroke-linecap="round" stroke-linejoin="round"/><path d="M826.5,1124.0 V1099.8 M821.2,1105.0 L826.5,1099.7 L831.8,1105.0 M839.4,1099.2 V1123.5 M834.1,1118.4 L839.4,1123.7 L844.7,1118.4" fill="none" stroke="#b9bec7" stroke-width="2.4" stroke-linecap="round" stroke-linejoin="round"/><path d="M1601.7,1124.0 V1099.8 M1596.4,1105.0 L1601.7,1099.7 L1607.0,1105.0 M1614.6,1099.2 V1123.5 M1609.3,1118.4 L1614.6,1123.7 L1619.9,1118.4" fill="none" stroke="#b9bec7" stroke-width="2.4" stroke-linecap="round" stroke-linejoin="round"/><path d="M1914.9,1124.0 V1099.8 M1909.6,1105.0 L1914.9,1099.7 L1920.2,1105.0 M1927.8,1099.2 V1123.5 M1922.5,1118.4 L1927.8,1123.7 L1933.1,1118.4" fill="none" stroke="#b9bec7" stroke-width="2.4" stroke-linecap="round" stroke-linejoin="round"/><path d="M2227.2,1124.0 V1099.8 M2221.9,1105.0 L2227.2,1099.7 L2232.5,1105.0 M2240.1,1099.2 V1123.5 M2234.8,1118.4 L2240.1,1123.7 L2245.4,1118.4" fill="none" stroke="#b9bec7" stroke-width="2.4" stroke-linecap="round" stroke-linejoin="round"/><path d="M2544.2,1124.0 V1099.8 M2538.9,1105.0 L2544.2,1099.7 L2549.5,1105.0 M2557.1,1099.2 V1123.5 M2551.8,1118.4 L2557.1,1123.7 L2562.4,1118.4" fill="none" stroke="#b9bec7" stroke-width="2.4" stroke-linecap="round" stroke-linejoin="round"/><path d="M2853.3,1124.0 V1099.8 M2848.0,1105.0 L2853.3,1099.7 L2858.6,1105.0 M2866.2,1099.2 V1123.5 M2860.9,1118.4 L2866.2,1123.7 L2871.5,1118.4" fill="none" stroke="#b9bec7" stroke-width="2.4" stroke-linecap="round" stroke-linejoin="round"/>
<path d="M3084.6,1124.0 V1099.8 M3079.3,1105.0 L3084.6,1099.7 L3089.9,1105.0 " fill="none" stroke="#b9bec7" stroke-width="2.4" stroke-linecap="round" stroke-linejoin="round"/>
<g fill="none" stroke="#0d9516" stroke-width="3.1" stroke-linecap="round" stroke-linejoin="round">
<path d="M2339.6,1210.3 A16.1,16.1 0 1 0 2350.5,1223.2"/>
<path d="M2326,1224.9 L2331.6,1230.6 L2349,1213.2"/></g>
<circle cx="3150" cy="1214.6" r="4.4" fill="#eef0f4"/><circle cx="3150" cy="1229.1" r="4.4" fill="#eef0f4"/><circle cx="3150" cy="1243.4" r="4.4" fill="#eef0f4"/><circle cx="3150" cy="1331.6" r="4.4" fill="#eef0f4"/><circle cx="3150" cy="1346.1" r="4.4" fill="#eef0f4"/><circle cx="3150" cy="1360.4" r="4.4" fill="#eef0f4"/><circle cx="3150" cy="1448.6" r="4.4" fill="#eef0f4"/><circle cx="3150" cy="1463.1" r="4.4" fill="#eef0f4"/><circle cx="3150" cy="1477.4" r="4.4" fill="#eef0f4"/><circle cx="3150" cy="1565.6" r="4.4" fill="#eef0f4"/><circle cx="3150" cy="1580.1" r="4.4" fill="#eef0f4"/><circle cx="3150" cy="1594.4" r="4.4" fill="#eef0f4"/>
</svg>

<div class="a pg-cur" style="left:1100.3px;top:1686px;width:104.6px;height:104.6px;border-radius:50%;background:#33445b"></div>
<span class="t" style="left:1140.90px;top:1738.72px;font-size:36px;color:#e8eaee;-webkit-text-stroke:0.5px #e8eaee;">1</span>
<span class="t" style="left:1257.70px;top:1738.72px;font-size:36px;color:#a3a8b2;-webkit-text-stroke:0.5px #a3a8b2;">2</span>
<span class="t" style="left:1372.70px;top:1738.72px;font-size:36px;color:#a3a8b2;-webkit-text-stroke:0.5px #a3a8b2;">3</span>
<span class="t" style="left:1488.20px;top:1738.72px;font-size:36px;color:#a3a8b2;-webkit-text-stroke:0.5px #a3a8b2;">4</span>
<span class="t" style="left:1602.70px;top:1738.72px;font-size:36px;color:#a3a8b2;-webkit-text-stroke:0.5px #a3a8b2;">5</span>
<span class="t" style="left:2699.45px;top:1738.00px;font-size:37.5px;color:#a3a8b3;transform:scaleX(1.0132);-webkit-text-stroke:0.5px #a3a8b3;">Total</span>
<span class="t" style="left:2788.38px;top:1738.00px;font-size:37.5px;color:#a3a8b3;font-weight:700;transform:scaleX(1.0391);-webkit-text-stroke:0.3px #a3a8b3;">15248</span>
<span class="t" style="left:2905.99px;top:1738.00px;font-size:37.5px;color:#a3a8b3;transform:scaleX(0.9865);-webkit-text-stroke:0.5px #a3a8b3;">Discovery Scores</span>
<svg class="pg-icons" width="1100" height="60" viewBox="880 1710 1100 60" style="left:880px;top:1710px">
<g fill="none" stroke-width="3.9" stroke-linecap="round" stroke-linejoin="round">
<path d="M919.5,1729.6 L911.7,1738.4 L920.1,1747.6 M933.4,1729.6 L925.5,1738.4 L934,1747.6" stroke="#555d6c"/>
<path d="M1041.7,1729.6 L1033.6,1738.4 L1042.2,1747.6" stroke="#555d6c"/>
<path d="M1723.4,1729.6 L1731.4,1738.5 L1722.9,1747.4" stroke="#a3a8b2"/>
<path d="M1831.3,1729.6 L1839,1738.5 L1830.7,1747.4 M1845.1,1729.6 L1853.1,1738.5 L1844.6,1747.4" stroke="#a3a8b2"/>
</g></svg>
</section>

</main>
</div>
</body></html>
